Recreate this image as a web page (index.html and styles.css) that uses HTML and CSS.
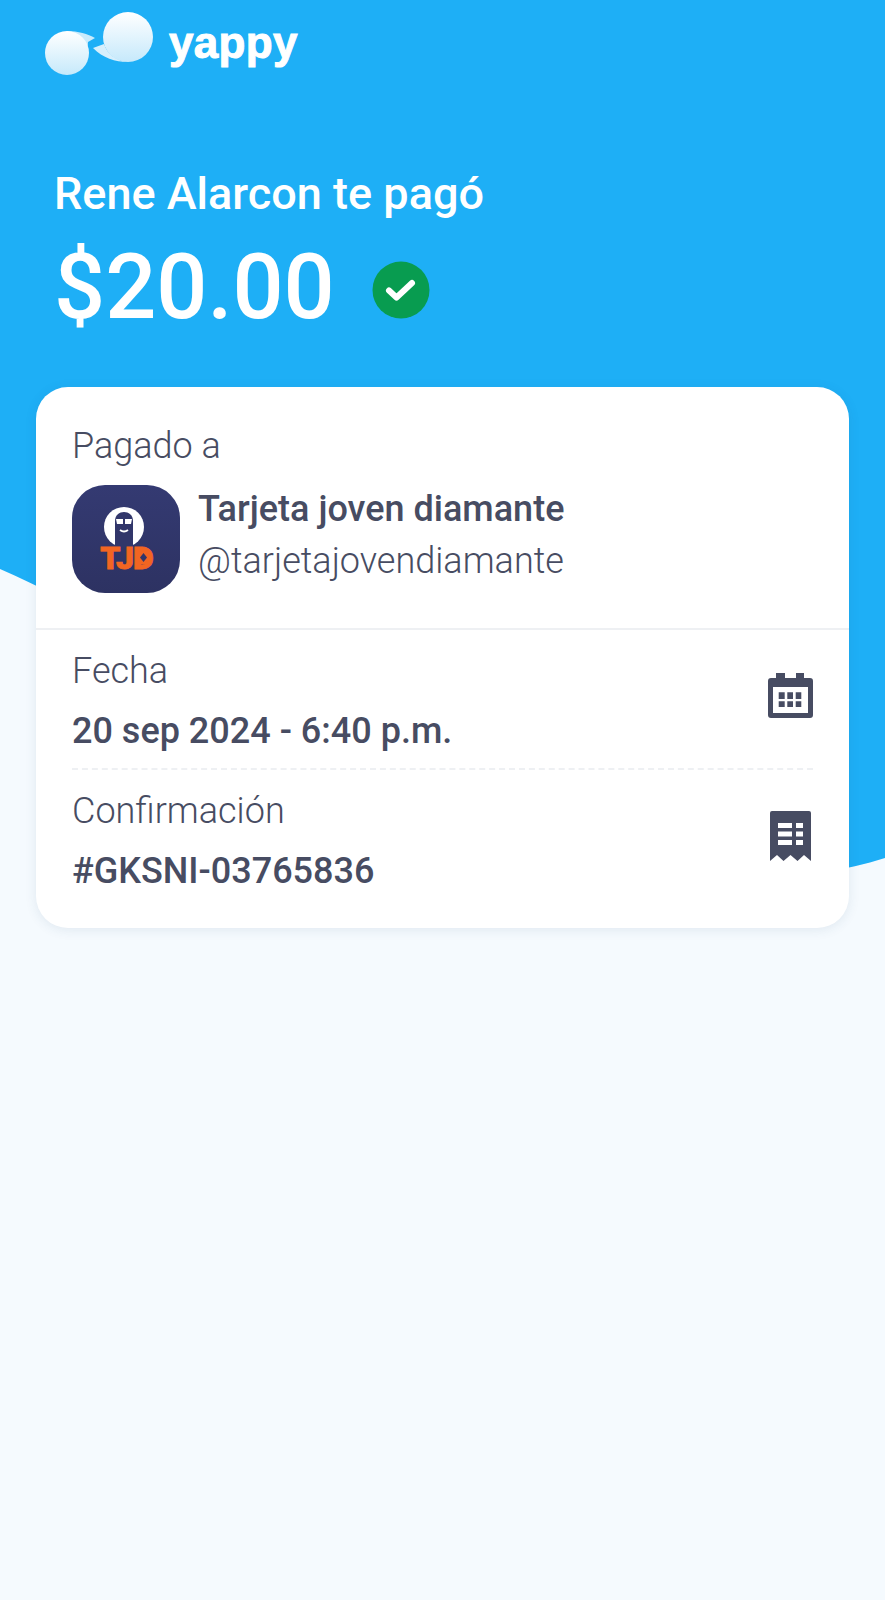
FILE: index.html
```html
<!DOCTYPE html>
<html lang="es">
<head>
<meta charset="utf-8">
<title>Yappy</title>
<link rel="stylesheet" href="styles.css">
</head>
<body>
<main class="page">
  <svg class="wave" width="885" height="940" viewBox="0 0 885 940" aria-hidden="true">
    <path d="M0 0H885V858C600 950 250 680 0 569Z" fill="#1eaff6"/>
  </svg>
  <header class="brand">
    <svg class="brand-mark" width="112" height="66" viewBox="0 0 112 66" aria-hidden="true">
      <defs>
        <linearGradient id="bub" x1="0" y1="0" x2="0" y2="1">
          <stop offset="0" stop-color="#ffffff"/>
          <stop offset="1" stop-color="#c6e9fb"/>
        </linearGradient>
      </defs>
      <path d="M22 19C33 19 43 22 50 26L43 30C43 33 42 36 41 38L22 40Z" fill="#c9ebfc"/>
      <circle cx="22" cy="41" r="22" fill="url(#bub)"/>
      <path d="M48 36L59 32C62 42 72 49 83 50C70 50 58 46 48 36Z" fill="#d6effc"/>
      <circle cx="83" cy="25" r="25" fill="url(#bub)"/>
    </svg>
    <span class="brand-name">yappy</span>
  </header>
  <section class="hero">
    <h1 class="hero-title">Rene Alarcon te pagó</h1>
    <div class="amount-row">
      <span class="amount">$20.00</span>
      <svg class="ok" width="58" height="58" viewBox="0 0 58 58" aria-hidden="true">
        <circle cx="29" cy="29" r="28.5" fill="#089c50"/>
        <path d="M17 29.500L24.500 36.500L40 22" fill="none" stroke="#fff" stroke-width="6" stroke-linecap="round" stroke-linejoin="round"/>
      </svg>
    </div>
  </section>
  <section class="card">
    <div class="payee">
      <div class="label">Pagado a</div>
      <div class="payee-row">
        <svg class="avatar" width="108" height="108" viewBox="0 0 108 108" role="img" aria-label="TJD">
          <defs>
            <linearGradient id="av" x1="0" y1="0" x2="0" y2="1">
              <stop offset="0" stop-color="#343a72"/>
              <stop offset="1" stop-color="#2d3262"/>
            </linearGradient>
          </defs>
          <rect width="108" height="108" rx="33" fill="url(#av)"/>
          <circle cx="52" cy="42" r="20" fill="#fff"/>
          <path d="M43 62V36C43 24 61 24 61 36V62Z" fill="#31366a"/>
          <path d="M44 34H51V39H45ZM53 34H60L59 39H53Z" fill="#fff"/>
          <path d="M48 45Q52 48 56 45" stroke="#fff" stroke-width="1.8" fill="none"/>
          <text x="54.500" y="84" class="avatar-text" text-anchor="middle">TJD</text>
          <rect x="66" y="66" width="10" height="13" fill="#f26522"/>
          <path d="M71.500 68L75 72.500L71.500 77L68 72.500Z" fill="#31366a"/>
        </svg>
        <div class="payee-text">
          <div class="value">Tarjeta joven diamante</div>
          <div class="handle">@tarjetajovendiamante</div>
        </div>
      </div>
    </div>
    <div class="details">
      <div class="detail detail-date">
        <div>
          <div class="label">Fecha</div>
          <div class="value value-gap">20 sep 2024 - 6:40 p.m.</div>
        </div>
        <svg class="icon icon-cal" width="45" height="45" viewBox="0 0 45 45" aria-hidden="true">
          <path fill-rule="evenodd" d="M8 0H17V5H28V0H36V5H42Q45 5 45 8V42Q45 45 42 45H3Q0 45 0 42V8Q0 5 3 5H8ZM5 14V40H40V14Z" fill="#474c62"/>
          <path d="M10.700 19.300H16.700V26H10.700ZM19.300 19.300H25V26H19.300ZM27.700 19.300H33.300V26H27.700ZM10.700 28.300H16.700V34H10.700ZM19.300 28.300H25V34H19.300ZM27.700 28.300H33.300V34H27.700Z" fill="#474c62"/>
        </svg>
      </div>
      <div class="detail">
        <div>
          <div class="label">Confirmación</div>
          <div class="value value-gap">#GKSNI-03765836</div>
        </div>
        <svg class="icon icon-receipt" width="41" height="50" viewBox="0 0 41 50" aria-hidden="true">
          <path fill-rule="evenodd" d="M2 0H39Q41 0 41 2V50L34 44L27.500 50L20.500 44L13.500 50L7 44L0 50V2Q0 0 2 0ZM8 12V17H22V12ZM26 12V17H33V12ZM8 20.500V25.500H22V20.500ZM26 20.500V25.500H33V20.500ZM8 29V34H22V29ZM26 29V34H33V29Z" fill="#474c62"/>
        </svg>
      </div>
    </div>
  </section>
</main>
</body>
</html>
```
FILE: styles.css
```css
* { box-sizing: border-box; }
html, body { margin: 0; padding: 0; }
body {
  background: #f5fafe;
  font-family: Roboto, "Liberation Sans", sans-serif;
  color: #474c62;
}
.page {
  position: relative;
  width: 885px;
  height: 1600px;
  overflow: hidden;
}
.wave { position: absolute; top: 0; left: 0; }
.brand, .hero, .card { position: relative; }
.brand {
  display: flex;
  align-items: flex-start;
  gap: 12px;
  padding: 12px 0 0 45px;
  height: 172px;
}
.brand-name {
  font-family: "Liberation Sans", Arial, sans-serif;
  font-weight: 700;
  font-size: 44px;
  line-height: 62px;
  letter-spacing: 0.3px;
  color: #fff;
  -webkit-text-stroke: 1px #fff;
}
.hero { padding-left: 54px; height: 215px; color: #fff; }
.hero-title {
  margin: 0;
  font-size: 45px;
  font-weight: 500;
  line-height: 44px;
}
.amount-row { display: flex; align-items: center; gap: 37px; margin-top: 18px; }
.amount { font-size: 90px; line-height: 108px; font-weight: 500; }
.ok { margin-top: 4px; }
.card {
  margin: 0 36px;
  height: 541px;
  background: #fff;
  border-radius: 32px;
  box-shadow: 0 2px 12px rgba(40, 80, 120, 0.1);
}
.payee { padding: 39px 36px 36px; border-bottom: 2px solid #eef0f3; height: 243px; }
.label { font-size: 36px; font-weight: 300; line-height: 40px; }
.payee-row { display: flex; gap: 18px; margin-top: 19px; }
.payee-text { padding-top: 3px; }
.value { font-size: 36px; font-weight: 500; line-height: 42px; }
.handle { font-size: 36px; font-weight: 300; line-height: 42px; margin-top: 10px; }
.value-gap { margin-top: 19px; }
.details { padding: 0 36px; }
.detail {
  display: flex;
  justify-content: space-between;
  align-items: flex-start;
  height: 140px;
  padding-top: 21px;
}
.detail-date { border-bottom: 2px dashed #eef0f3; }
.icon-cal { margin-top: 22px; }
.icon-receipt { margin-top: 20px; margin-right: 2px; }
.avatar-text { font-family: Roboto, sans-serif; font-weight: 900; font-size: 32px; fill: #f26522; letter-spacing: -1px; stroke: #f26522; stroke-width: 0.8; }
```
